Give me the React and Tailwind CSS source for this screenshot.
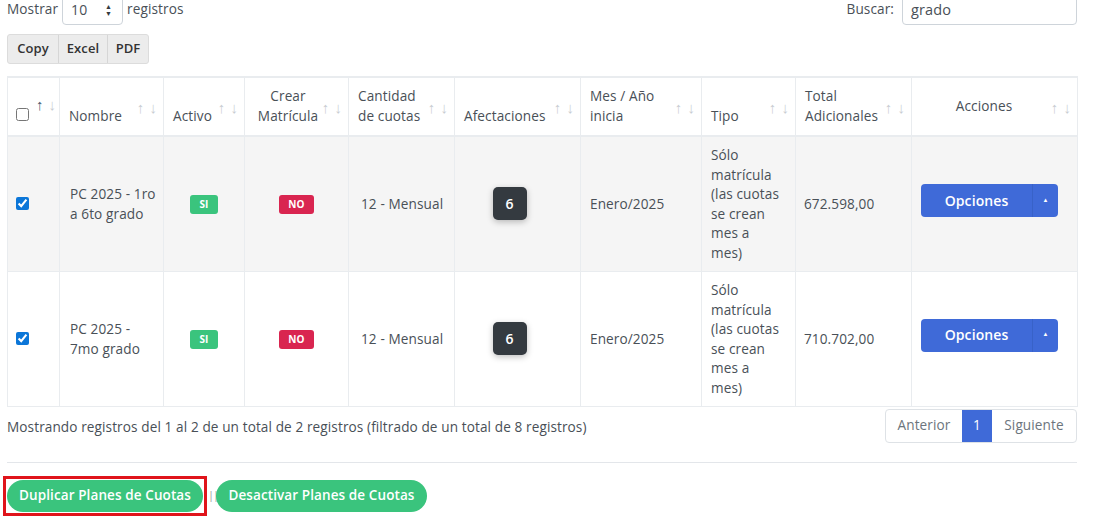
import { useState } from "react";

const rows = [
    { nombre: ["PC 2025 - 1ro", "a 6to grado"], total: "672.598,00", striped: true },
    { nombre: ["PC 2025 -", "7mo grado"], total: "710.702,00", striped: false },
];

const tipo = ["Sólo", "matrícula", "(las cuotas", "se crean", "mes a", "mes)"];

function SortArrows() {
    return (
        <span className="absolute right-[6px] top-1/2 -translate-y-1/2 flex gap-[5px] text-[15px] font-normal leading-none">
            <span className="text-[#c9cdd2]">↑</span>
            <span className="text-[#c9cdd2]">↓</span>
        </span>
    );
}

function Th({ children, align = "text-left align-bottom", pad = "pr-[30px]" }) {
    return (
        <th
            className={`relative border border-[#e9ecef] border-b-2 pl-[9px] pb-[10px] pt-[8px] font-medium text-[#495057] ${pad} ${align}`}
        >
            {children}
            <SortArrows />
        </th>
    );
}

export default function App() {
    const [checked, setChecked] = useState([true, true]);

    return (
        <div className="w-[1094px] h-[516px] overflow-hidden bg-white text-[13.6px] tracking-[0.1px] text-[#495057] font-['Open_Sans',sans-serif]">
            <div className="px-[7px] pr-[17px]">
                {/* top controls */}
                <div className="flex items-center justify-between -mt-[6px] h-[31px]">
                    <div className="flex items-center gap-[4px]">
                        <span>Mostrar</span>
                        <div className="flex items-center justify-between w-[61px] h-[31px] border border-[#ced4da] rounded-[4px] pl-[8px] pr-[10px]">
                            <span className="text-[14px]">10</span>
                            <span className="flex flex-col text-[7px] leading-[7px] text-[#343a40]">
                                <span>▲</span>
                                <span>▼</span>
                            </span>
                        </div>
                        <span>registros</span>
                    </div>
                    <div className="flex items-center gap-[8px]">
                        <span>Buscar:</span>
                        <div className="w-[175px] h-[31px] border border-[#ced4da] rounded-[4px] px-[8px] flex items-center text-[14.5px]">
                            grado
                        </div>
                    </div>
                </div>

                {/* export buttons */}
                <div className="mt-[9px] flex w-fit border border-[#dcdcdc] rounded-[3px] bg-[#ececec] text-[13px] font-semibold text-[#333]">
                    <button className="w-[51px] h-[28px] border-r border-[#d6d6d6]">Copy</button>
                    <button className="w-[49px] h-[28px] border-r border-[#d6d6d6]">Excel</button>
                    <button className="w-[40px] h-[28px]">PDF</button>
                </div>

                {/* table */}
                <table className="mt-[12px] w-[1070px] table-fixed border-collapse border-t-2 border-[#e9ecef]">
                    <colgroup>
                        <col className="w-[52px]" />
                        <col className="w-[104px]" />
                        <col className="w-[81px]" />
                        <col className="w-[104px]" />
                        <col className="w-[106px]" />
                        <col className="w-[126px]" />
                        <col className="w-[121px]" />
                        <col className="w-[94px]" />
                        <col className="w-[116px]" />
                        <col className="w-[166px]" />
                    </colgroup>
                    <thead>
                        <tr className="h-[57px] leading-[19.5px]">
                            <th className="relative border border-[#e9ecef] border-b-2 px-[8px] pb-[12px] align-bottom text-left">
                                <input type="checkbox" className="w-[13px] h-[13px] align-middle" />
                                <span className="absolute left-[28px] top-1/2 -translate-y-[10px] flex gap-[5px] text-[15px] font-normal leading-none">
                                    <span className="text-[#4a5a70]">↑</span>
                                    <span className="text-[#c9cdd2]">↓</span>
                                </span>
                            </th>
                            <Th>Nombre</Th>
                            <Th>Activo</Th>
                            <Th align="text-center align-bottom" pad="pr-[26px]">
                                Crear Matrícula
                            </Th>
                            <Th>Cantidad de cuotas</Th>
                            <Th>Afectaciones</Th>
                            <Th>Mes / Año inicia</Th>
                            <Th>Tipo</Th>
                            <Th pad="pr-[26px]">Total Adicionales</Th>
                            <Th align="text-center align-middle">Acciones</Th>
                        </tr>
                    </thead>
                    <tbody>
                        {rows.map((r, i) => (
                            <tr
                                key={i}
                                className={`h-[135px] leading-[19.5px] ${r.striped ? "bg-[#f5f5f5]" : "bg-white"}`}
                            >
                                <td className="border border-[#e9ecef] px-[8px] align-middle">
                                    <input
                                        type="checkbox"
                                        checked={checked[i]}
                                        onChange={() =>
                                            setChecked(checked.map((c, j) => (j === i ? !c : c)))
                                        }
                                        className="w-[13px] h-[13px] accent-[#0b76d8] align-middle -mt-[4px]"
                                    />
                                </td>
                                <td className="border border-[#e9ecef] px-[10px] align-middle whitespace-nowrap">
                                    {r.nombre[0]}
                                    <br />
                                    {r.nombre[1]}
                                </td>
                                <td className="border border-[#e9ecef] text-center align-middle">
                                    <span className="inline-block rounded-[3px] bg-[#3ac47d] px-[9px] text-[10px] leading-[19px] font-bold text-white">
                                        SI
                                    </span>
                                </td>
                                <td className="border border-[#e9ecef] text-center align-middle">
                                    <span className="inline-block rounded-[3px] bg-[#d92550] px-[9px] text-[10px] leading-[19px] font-bold text-white">
                                        NO
                                    </span>
                                </td>
                                <td className="border border-[#e9ecef] px-[12px] align-middle whitespace-nowrap">
                                    12 - Mensual
                                </td>
                                <td className="border border-[#e9ecef] pr-[16px] text-center align-middle">
                                    <span className="inline-flex items-center justify-center w-[34px] h-[33px] rounded-[5px] bg-[#343a40] text-white font-semibold text-[14px] shadow-[0_2px_6px_rgba(0,0,0,0.25)]">
                                        6
                                    </span>
                                </td>
                                <td className="border border-[#e9ecef] px-[9px] align-middle">Enero/2025</td>
                                <td className="border border-[#e9ecef] px-[9px] align-middle whitespace-nowrap">
                                    {tipo.map((t, k) => (
                                        <div key={k}>{t}</div>
                                    ))}
                                </td>
                                <td className="border border-[#e9ecef] px-[8px] align-middle">{r.total}</td>
                                <td className="border border-[#e9ecef] px-[9px] align-middle">
                                    <div className="flex h-[33px] w-[137px] -mt-[7px] rounded-[4px] bg-[#3f6ad8] text-white">
                                        <span className="flex-1 flex items-center justify-center font-semibold text-[14px]">
                                            Opciones
                                        </span>
                                        <span className="w-[26px] border-l border-[#3862c8] flex items-center justify-center text-[6px]">
                                            ▲
                                        </span>
                                    </div>
                                </td>
                            </tr>
                        ))}
                    </tbody>
                </table>

                {/* info + pagination */}
                <div className="flex items-center justify-between mt-[2px]">
                    <span className="translate-y-[2px]">
                        Mostrando registros del 1 al 2 de un total de 2 registros (filtrado de un total de 8 registros)
                    </span>
                    <div className="flex h-[34px] border border-[#dee2e6] rounded-[4px] overflow-hidden text-[#6c757d]">
                        <span className="w-[76px] flex items-center justify-center">Anterior</span>
                        <span className="w-[30px] flex items-center justify-center bg-[#3f6ad8] text-white">1</span>
                        <span className="w-[84px] flex items-center justify-center">Siguiente</span>
                    </div>
                </div>

                <hr className="mt-[19px] border-t border-[#e3e6ea]" />

                {/* actions */}
                <div className="mt-[13px] flex items-center">
                    <div className="-ml-[4px] border-[3px] border-[#e0141b] p-[1px] pr-[1px]">
                        <button className="h-[32px] w-[196px] rounded-full bg-[#3ac47d] text-white font-semibold text-[13.5px]">
                            Duplicar Planes de Cuotas
                        </button>
                    </div>
                    <span className="ml-[1px] mr-[1px] text-[#9a9a9a] text-[11px] tracking-[-1px] w-[7px]">||</span>
                    <button className="h-[32px] w-[211px] rounded-full bg-[#3ac47d] text-white font-semibold text-[13.5px]">
                        Desactivar Planes de Cuotas
                    </button>
                </div>
            </div>
        </div>
    );
}
